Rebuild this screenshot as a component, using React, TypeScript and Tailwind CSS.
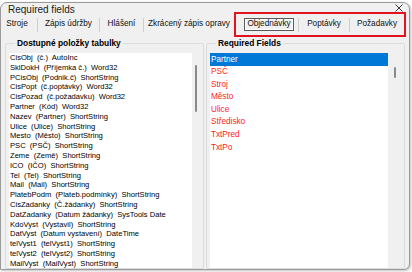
const leftItems = [
  "CisObj  (č.)  AutoInc",
  "SklDokH  (Příjemka č.)  Word32",
  "PCisObj  (Podnik.č)  ShortString",
  "CisPopt  (č.poptávky)  Word32",
  "CisPozad  (č.požadavku)  Word32",
  "Partner  (Kód)  Word32",
  "Nazev  (Partner)  ShortString",
  "Ulice  (Ulice)  ShortString",
  "Mesto  (Město)  ShortString",
  "PSC  (PSČ)  ShortString",
  "Zeme  (Země)  ShortString",
  "ICO  (IČO)  ShortString",
  "Tel  (Tel)  ShortString",
  "Mail  (Mail)  ShortString",
  "PlatebPodm  (Plateb.podmínky)  ShortString",
  "CisZadanky  (Č.žádanky)  ShortString",
  "DatZadanky  (Datum žádanky)  SysTools Date",
  "KdoVyst  (Vystavil)  ShortString",
  "DatVyst  (Datum vystavení)  DateTime",
  "telVyst1  (telVyst1)  ShortString",
  "telVyst2  (telVyst2)  ShortString",
  "MailVyst  (MailVyst)  ShortString",
];

const requiredItems = ["PSČ", "Stroj", "Město", "Ulice", "Středisko", "TxtPred", "TxtPo"];

function Sep() {
  return <div className="w-px h-[14px] bg-[#cfcfcf]" />;
}

function GroupBox({ title, children }: { title: string; children: React.ReactNode }) {
  return (
    <fieldset className="flex-1 min-w-0 border border-[#dcdcdc] rounded-[2px] px-[3px] flex flex-col">
      <legend className="ml-[6px] px-[2px] text-[8.4px] font-bold leading-[10px] text-black">{title}</legend>
      {children}
    </fieldset>
  );
}

export default function App() {
  return (
    <div className="w-[412px] h-[272px] bg-white overflow-hidden" style={{ fontFamily: '"Liberation Sans", Arial, sans-serif' }}>
      <div className="mt-[2px] w-[410px] h-[268px] bg-[#f0f0f0] border border-[#9a9a9a] rounded-tl-[7px] rounded-tr-[7px] rounded-br-[6px] flex flex-col overflow-hidden shadow-[1px_1px_3px_rgba(0,0,0,0.25)]">
        {/* title */}
        <div className="h-[9px] flex items-start justify-between pl-[7px] pr-[6px]">
          <span className="mt-[2px] text-[10px] leading-[10px] text-[#1a1a1a]">Required fields</span>
          <svg width="8" height="8" viewBox="0 0 8 8" className="mt-[1px]">
            <path d="M0.5 0.5 L7.5 7.5 M7.5 0.5 L0.5 7.5" stroke="#222" strokeWidth="0.9" />
          </svg>
        </div>

        {/* tabs */}
        <div className="h-[25px] flex items-center text-[8.2px] text-[#111]">
          <div className="w-[36px] pr-[4px] text-center">Stroje</div>
          <Sep />
          <div className="w-[61px] text-center">Zápis údržby</div>
          <Sep />
          <div className="w-[43px] text-center">Hlášení</div>
          <Sep />
          <div className="w-[90px] text-center whitespace-nowrap">Zkrácený zápis opravy</div>
          <div className="w-[172px] h-[25px] border-2 border-[#e3121f] flex items-center pl-[8px]">
            <div className="w-[50px] h-[13px] border border-[#5a5a5a] shadow-[inset_0_0_0_1px_#ffffff] flex items-center justify-center">
              Objednávky
            </div>
            <div className="ml-[4px]">
              <Sep />
            </div>
            <div className="w-[50px] text-center">Poptávky</div>
            <Sep />
            <div className="w-[54px] text-center">Požadavky</div>
          </div>
        </div>

        {/* content */}
        <div className="flex-1 flex gap-[2px] px-[4px] pt-[1px] min-h-0">
          <GroupBox title="Dostupné položky tabulky">
            <div className="flex-1 flex min-h-0 mt-[5px]">
              <div className="w-[183px] bg-white pl-[1px] overflow-hidden">
                {leftItems.map((t) => (
                  <div key={t} className="h-[9.8px] leading-[9.8px] text-[7.6px] whitespace-pre text-black">
                    {t}
                  </div>
                ))}
              </div>
              <div className="flex-1 flex justify-center pt-[12px]">
                <div className="w-[2px] h-[47px] bg-[#8a8a8a] rounded-full" />
              </div>
            </div>
          </GroupBox>
          <GroupBox title="Required Fields">
            <div className="flex-1 flex min-h-0 mt-[5px]">
              <div className="w-[178px] bg-white overflow-hidden">
                <div className="h-[13px] bg-[#0078d7] text-white text-[8.2px] leading-[13px] pl-[1px]">Partner</div>
                {requiredItems.map((t) => (
                  <div key={t} className="h-[12.6px] leading-[12.6px] text-[8.2px] pl-[1px] text-[#ff1a1a]">
                    {t}
                  </div>
                ))}
              </div>
              <div className="flex-1 flex justify-center pt-[14px]">
                <div className="w-[2px] h-[11px] bg-[#8a8a8a] rounded-full" />
              </div>
            </div>
          </GroupBox>
        </div>
      </div>
    </div>
  );
}
